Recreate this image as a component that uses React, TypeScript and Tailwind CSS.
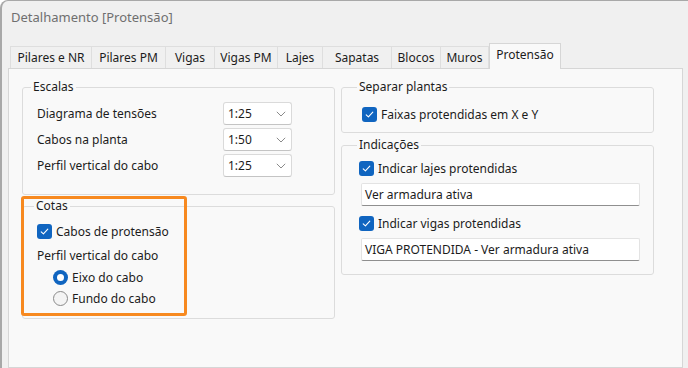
import React from "react";

const Check = () => (
  <span className="w-[15px] h-[15px] rounded-[3px] bg-[#1065c0] flex items-center justify-center shrink-0">
    <svg width="11" height="11" viewBox="0 0 11 11">
      <path d="M2.2 5.8 L4.4 7.9 L8.8 3.2" fill="none" stroke="#ffffff" strokeWidth="1.1" strokeLinecap="round" strokeLinejoin="round" />
    </svg>
  </span>
);

const Radio = ({ on }: { on: boolean }) =>
  on ? (
    <span className="w-[15px] h-[15px] rounded-full bg-[#1065c0] flex items-center justify-center shrink-0">
      <span className="w-[7px] h-[7px] rounded-full bg-white" />
    </span>
  ) : (
    <span className="w-[15px] h-[15px] rounded-full border border-[#8a8a8a] bg-[#f4f4f4] shrink-0" />
  );

const Combo = ({ v }: { v: string }) => (
  <div className="w-[69px] h-[23px] bg-white border border-[#dadada] border-b-[#c4c4c4] rounded-[3px] flex items-center justify-between pl-[4px] pr-[5px]">
    <span>{v}</span>
    <svg width="10" height="6" viewBox="0 0 10 6">
      <path d="M0.8 0.8 L5 5 L9.2 0.8" fill="none" stroke="#8a8a8a" strokeWidth="1" />
    </svg>
  </div>
);

const Tab = ({ label, w, sel, first }: { label: string; w: string; sel?: boolean; first?: boolean }) =>
  sel ? (
    <div className={`${w} h-[26px] bg-[#f9f9f9] border-x border-t border-[#d6d6d6] -mb-px relative flex items-start justify-center pt-[3px]`}>
      {label}
    </div>
  ) : (
    <div className={`${w} h-[22px] border-r border-t border-[#dedede] ${first ? "border-l" : ""} flex items-center justify-center`}>
      {label}
    </div>
  );

export default function App() {
  return (
    <div className="w-[688px] h-[368px] bg-[#f0f0f0] overflow-hidden border-l-2 border-t border-[#a8a8a8] rounded-tl-[8px] flex flex-col text-[12px] leading-[16px] text-[#1c1c1c] font-['Noto_Sans',sans-serif]">
      <div className="h-[41px] shrink-0 pl-[9px] pt-[6px] text-[13px] leading-[20px] text-[#6f6f6f]">
        Detalhamento [Protensão]
      </div>
      <div className="ml-[6px] w-[675px] flex-1 flex flex-col">
        <div className="h-[26px] pl-[2px] flex items-end shrink-0 relative z-10">
          <Tab label="Pilares e NR" w="w-[82px]" first />
          <Tab label="Pilares PM" w="w-[74px]" />
          <Tab label="Vigas" w="w-[49px]" />
          <Tab label="Vigas PM" w="w-[63px]" />
          <Tab label="Lajes" w="w-[45px]" />
          <Tab label="Sapatas" w="w-[69px]" />
          <Tab label="Blocos" w="w-[49px]" />
          <Tab label="Muros" w="w-[48px]" />
          <Tab label="Protensão" w="w-[72px]" sel />
        </div>
        <div className="flex-1 bg-[#f9f9f9] border border-[#d6d6d6] pl-[13px] pt-[10px] flex gap-[6px]">
          {/* Left column */}
          <div className="w-[313px] flex flex-col">
            <fieldset className="border border-[#dcdcdc] rounded-[3px] pt-[7px] pb-[17px]">
              <legend className="ml-[8px] px-[2px] leading-[16px]">Escalas</legend>
              <div className="pl-[14px] flex flex-col gap-[3px]">
                {[
                  ["Diagrama de tensões", "1:25"],
                  ["Cabos na planta", "1:50"],
                  ["Perfil vertical do cabo", "1:25"],
                ].map(([l, v]) => (
                  <div key={l} className="flex items-center h-[23px]">
                    <span className="w-[186px]">{l}</span>
                    <Combo v={v} />
                  </div>
                ))}
              </div>
            </fieldset>
            <div className="relative mt-[3px]">
              <fieldset className="border border-[#dcdcdc] rounded-[3px] pt-[7px] pb-[9px]">
                <legend className="ml-[11px] px-[2px] leading-[16px]">Cotas</legend>
                <div className="pl-[14px] flex flex-col">
                  <div className="h-[21px] flex items-center gap-[4px]">
                    <Check />
                    <span>Cabos de protensão</span>
                  </div>
                  <div className="h-[21px] mt-[3px] flex items-center">Perfil vertical do cabo</div>
                  <div className="h-[21px] mt-[1px] pl-[16px] flex items-center gap-[4px]">
                    <Radio on />
                    <span>Eixo do cabo</span>
                  </div>
                  <div className="h-[21px] pl-[16px] flex items-center gap-[4px]">
                    <Radio on={false} />
                    <span>Fundo do cabo</span>
                  </div>
                </div>
              </fieldset>
              <div className="absolute left-[-1px] top-[-2px] w-[166px] h-[120px] border-[3px] border-[#f7891f] rounded-[3px]" />
            </div>
          </div>
          {/* Right column */}
          <div className="w-[313px] flex flex-col">
            <fieldset className="border border-[#dcdcdc] rounded-[3px] pt-[9px] pb-[7px]">
              <legend className="ml-[15px] px-[2px] leading-[16px]">Separar plantas</legend>
              <div className="pl-[20px] h-[21px] flex items-center gap-[4px]">
                <Check />
                <span>Faixas protendidas em X e Y</span>
              </div>
            </fieldset>
            <fieldset className="mt-[4px] border border-[#dcdcdc] rounded-[3px] pt-[5px] pb-[13px]">
              <legend className="ml-[15px] px-[2px] leading-[16px]">Indicações</legend>
              <div className="pl-[17px] flex flex-col">
                <div className="h-[21px] flex items-center gap-[4px]">
                  <Check />
                  <span>Indicar lajes protendidas</span>
                </div>
                <div className="mt-[4px] ml-[2px] w-[279px] h-[23px] bg-white border border-[#e3e3e3] border-b-[#8f8f8f] rounded-[2px] flex items-center pl-[3px]">
                  Ver armadura ativa
                </div>
                <div className="mt-[7px] h-[21px] flex items-center gap-[4px]">
                  <Check />
                  <span>Indicar vigas protendidas</span>
                </div>
                <div className="mt-[4px] ml-[2px] w-[279px] h-[23px] bg-white border border-[#e3e3e3] border-b-[#8f8f8f] rounded-[2px] flex items-center pl-[3px]">
                  VIGA PROTENDIDA - Ver armadura ativa
                </div>
              </div>
            </fieldset>
          </div>
        </div>
      </div>
    </div>
  );
}
